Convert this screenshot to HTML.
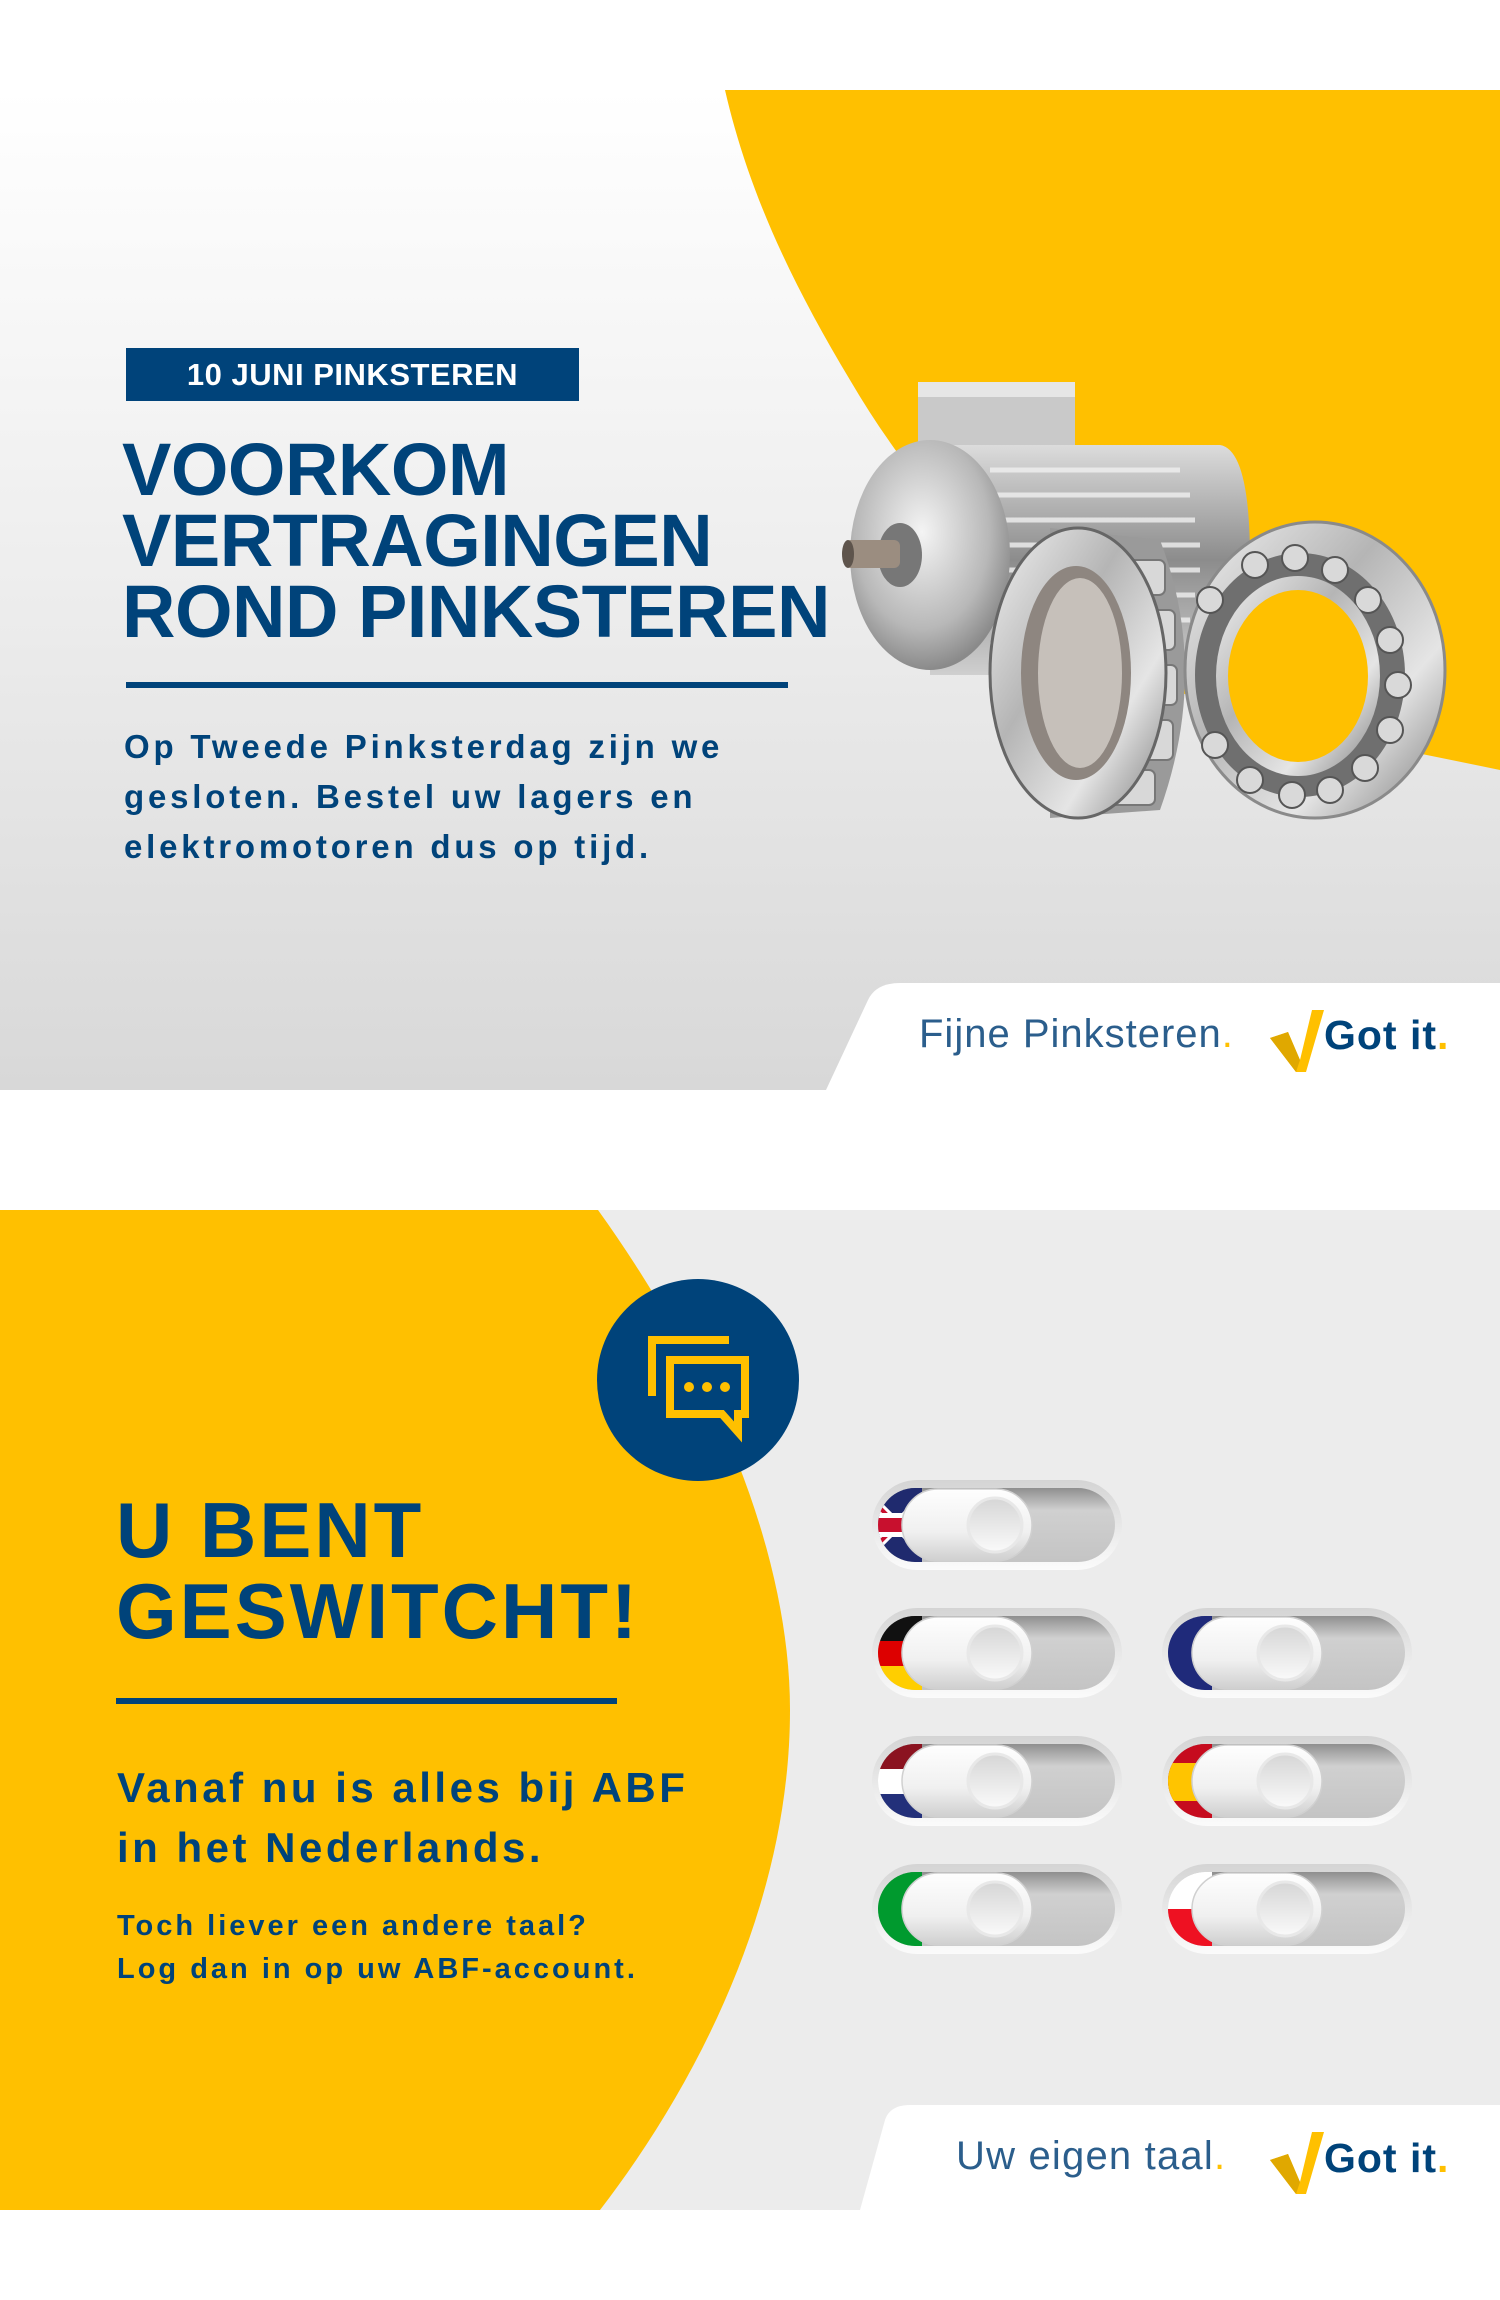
<!DOCTYPE html>
<html><head><meta charset="utf-8"><style>
*{margin:0;padding:0;box-sizing:border-box}
body{width:1500px;height:2300px;background:#fff;position:relative;overflow:hidden;font-family:"Liberation Sans",sans-serif}
.abs{position:absolute}
.navy{color:#00437a}
</style></head><body>
<svg class="abs" style="left:0;top:0" width="1500" height="2300" viewBox="0 0 1500 2300">
<defs>
<linearGradient id="gtop" x1="0" y1="0" x2="0" y2="1"><stop offset="0" stop-color="#ffffff"/><stop offset="0.5" stop-color="#ededed"/><stop offset="1" stop-color="#d8d8d8"/></linearGradient>
<linearGradient id="metal" x1="0" y1="0" x2="1" y2="1"><stop offset="0" stop-color="#f2f2f2"/><stop offset="0.4" stop-color="#b5b5b5"/><stop offset="0.7" stop-color="#e5e5e5"/><stop offset="1" stop-color="#7a7a7a"/></linearGradient>
<linearGradient id="metal2" x1="0" y1="0" x2="0" y2="1"><stop offset="0" stop-color="#dcdcdc"/><stop offset="0.5" stop-color="#8c8c8c"/><stop offset="1" stop-color="#cfcfcf"/></linearGradient>
<radialGradient id="bell" cx="0.45" cy="0.4" r="0.6"><stop offset="0" stop-color="#f4f4f4"/><stop offset="0.7" stop-color="#b8b8b8"/><stop offset="1" stop-color="#8a8a8a"/></radialGradient>
<linearGradient id="track" x1="0" y1="0" x2="0" y2="1"><stop offset="0" stop-color="#8f8f8f"/><stop offset="0.3" stop-color="#d0d0d0"/><stop offset="1" stop-color="#c4c4c4"/></linearGradient>
<linearGradient id="knob" x1="0" y1="0" x2="0" y2="1"><stop offset="0" stop-color="#fefefe"/><stop offset="0.6" stop-color="#f0f0f0"/><stop offset="1" stop-color="#cfcfcf"/></linearGradient>
<linearGradient id="circ" x1="0" y1="0" x2="0" y2="1"><stop offset="0" stop-color="#d6d6d6"/><stop offset="1" stop-color="#fafafa"/></linearGradient>
<linearGradient id="outer" x1="0" y1="0" x2="0" y2="1"><stop offset="0" stop-color="#d4d4d4"/><stop offset="1" stop-color="#fbfbfb"/></linearGradient>
<clipPath id="tclip"><rect x="6" y="8" width="237" height="74" rx="37"/></clipPath>
<g id="tog">
<rect x="0" y="0" width="250" height="90" rx="45" fill="url(#outer)"/>
<rect x="6" y="8" width="237" height="74" rx="37" fill="url(#track)"/>
</g>
<g id="tog2">
<rect x="30" y="9" width="130" height="72" rx="36" fill="url(#knob)" stroke="#d0d0d0" stroke-width="1.5"/>
<circle cx="123" cy="45" r="27" fill="url(#circ)" stroke="#e8e8e8" stroke-width="3"/>
</g>
</defs>
<rect x="0" y="90" width="1500" height="1000" fill="url(#gtop)"/>
<path d="M725 90 L1500 90 L1500 770 C1380 745 1240 720 1150 680 C1030 620 920 500 850 380 C790 280 748 190 725 90 Z" fill="#ffc000"/>
<g>
<rect x="918" y="382" width="157" height="70" fill="#c9c9c9"/>
<rect x="918" y="382" width="157" height="15" fill="#e6e6e6"/>
<path d="M930 445 L1220 445 Q1250 450 1250 560 Q1250 670 1210 675 L930 675 Z" fill="url(#metal2)"/>
<g stroke="#f0f0f0" stroke-width="5" opacity="0.8">
<line x1="990" y1="470" x2="1180" y2="470"/><line x1="990" y1="495" x2="1190" y2="495"/><line x1="990" y1="520" x2="1195" y2="520"/><line x1="990" y1="545" x2="1200" y2="545"/><line x1="990" y1="570" x2="1200" y2="570"/><line x1="990" y1="595" x2="1195" y2="595"/><line x1="990" y1="620" x2="1190" y2="620"/><line x1="990" y1="645" x2="1180" y2="645"/>
</g>
<ellipse cx="930" cy="555" rx="80" ry="115" fill="url(#bell)"/>
<ellipse cx="900" cy="555" rx="22" ry="32" fill="#777"/>
<rect x="845" y="540" width="55" height="28" rx="6" fill="#9b8d80"/>
<ellipse cx="848" cy="554" rx="6" ry="14" fill="#5e544c"/>
</g>
<path d="M1050 528 L1160 540 Q1210 670 1160 810 L1050 818 Z" fill="#9a9a9a"/>
<g fill="#d8d8d8" stroke="#777" stroke-width="2">
<rect x="1110" y="560" width="55" height="35" rx="6"/><rect x="1120" y="610" width="55" height="40" rx="6"/><rect x="1122" y="665" width="55" height="40" rx="6"/><rect x="1118" y="720" width="55" height="40" rx="6"/><rect x="1105" y="770" width="50" height="35" rx="6"/>
</g>
<ellipse cx="1078" cy="673" rx="88" ry="145" fill="url(#metal)" stroke="#666" stroke-width="3"/>
<ellipse cx="1076" cy="673" rx="55" ry="107" fill="#8e8680"/>
<ellipse cx="1080" cy="673" rx="42" ry="95" fill="#c6c0ba"/>
<ellipse cx="1315" cy="670" rx="130" ry="148" fill="url(#metal)" stroke="#8a8a8a" stroke-width="3"/>
<ellipse cx="1300" cy="675" rx="105" ry="122" fill="#6f6f6f"/>
<g fill="#d9d9d9" stroke="#555" stroke-width="2">
<circle cx="1255" cy="565" r="13"/><circle cx="1295" cy="558" r="13"/><circle cx="1335" cy="570" r="13"/><circle cx="1368" cy="600" r="13"/><circle cx="1390" cy="640" r="13"/><circle cx="1398" cy="685" r="13"/><circle cx="1390" cy="730" r="13"/><circle cx="1365" cy="768" r="13"/><circle cx="1330" cy="790" r="13"/><circle cx="1292" cy="795" r="13"/><circle cx="1250" cy="780" r="13"/><circle cx="1215" cy="745" r="13"/><circle cx="1210" cy="600" r="13"/>
</g>
<ellipse cx="1298" cy="676" rx="82" ry="100" fill="url(#metal)"/>
<ellipse cx="1298" cy="676" rx="70" ry="86" fill="#ffc000"/>
<path d="M826 1090 L868 1000 Q876 983 900 983 L1500 983 L1500 1090 Z" fill="#fff"/>
<rect x="0" y="1210" width="1500" height="1000" fill="#ececec"/>
<path d="M0 1210 L598 1210 C720 1380 790 1560 790 1710 C790 1900 700 2080 600 2210 L0 2210 Z" fill="#ffc000"/>
<path d="M860 2210 L885 2120 Q890 2105 910 2105 L1500 2105 L1500 2210 Z" fill="#fff"/>
<rect x="0" y="2210" width="1500" height="90" fill="#fff"/>
<circle cx="698" cy="1380" r="101" fill="#00437a"/>
<g fill="none" stroke="#ffc000" stroke-width="8">
<path d="M729 1340 L652 1340 L652 1396"/>
<path d="M670 1360 L745 1360 L745 1414 L738 1414 L738 1432 L722 1414 L670 1414 Z"/>
</g>
<g fill="#ffc000"><circle cx="689" cy="1387" r="5"/><circle cx="707" cy="1387" r="5"/><circle cx="725" cy="1387" r="5"/></g>
<g transform="translate(872,1480)"><use href="#tog"/><g clip-path="url(#tclip)"><rect x="0" y="0" width="50" height="90" fill="#1f2a6e"/><path d="M0 20 L50 70 M0 70 L50 20" stroke="#fff" stroke-width="10"/><path d="M0 20 L50 70 M0 70 L50 20" stroke="#c8102e" stroke-width="4"/><rect x="0" y="33" width="50" height="24" fill="#fff"/><rect x="0" y="38" width="50" height="14" fill="#c8102e"/></g><use href="#tog2"/></g>
<g transform="translate(872,1608)"><use href="#tog"/><g clip-path="url(#tclip)"><rect x="0" y="0" width="50" height="33" fill="#111"/><rect x="0" y="33" width="50" height="25" fill="#dd0000"/><rect x="0" y="58" width="50" height="32" fill="#ffce00"/></g><use href="#tog2"/></g>
<g transform="translate(1162,1608)"><use href="#tog"/><g clip-path="url(#tclip)"><rect x="0" y="0" width="50" height="90" fill="#1f2a7a"/></g><use href="#tog2"/></g>
<g transform="translate(872,1736)"><use href="#tog"/><g clip-path="url(#tclip)"><rect x="0" y="0" width="50" height="33" fill="#8b1320"/><rect x="0" y="33" width="50" height="25" fill="#fff"/><rect x="0" y="58" width="50" height="32" fill="#23307a"/></g><use href="#tog2"/></g>
<g transform="translate(1162,1736)"><use href="#tog"/><g clip-path="url(#tclip)"><rect x="0" y="0" width="50" height="90" fill="#c60b1e"/><rect x="0" y="27" width="50" height="38" fill="#ffc400"/></g><use href="#tog2"/></g>
<g transform="translate(872,1864)"><use href="#tog"/><g clip-path="url(#tclip)"><rect x="0" y="0" width="50" height="90" fill="#009a2e"/></g><use href="#tog2"/></g>
<g transform="translate(1162,1864)"><use href="#tog"/><g clip-path="url(#tclip)"><rect x="0" y="0" width="50" height="45" fill="#fff"/><rect x="0" y="45" width="50" height="45" fill="#ee1122"/></g><use href="#tog2"/></g>
<g transform="translate(1270,1010)"><path d="M0 28 L18 22 L30 50 L42 0 L54 0 L36 62 L26 62 Z" fill="#ffc000"/><path d="M0 28 L18 22 L30 50 L26 62 Z" fill="#e0a800"/></g>
<g transform="translate(1270,2132)"><path d="M0 28 L18 22 L30 50 L42 0 L54 0 L36 62 L26 62 Z" fill="#ffc000"/><path d="M0 28 L18 22 L30 50 L26 62 Z" fill="#e0a800"/></g>
<rect x="126" y="682" width="662" height="6" fill="#00437a"/>
<rect x="116" y="1698" width="501" height="6" fill="#00437a"/>
<rect x="126" y="348" width="453" height="53" fill="#00437a"/>
</svg>

<div class="abs" style="left:126px;top:348px;width:453px;height:53px;line-height:53px;text-align:center;color:#fff;font-weight:bold;font-size:31px;letter-spacing:0.5px">10 JUNI PINKSTEREN</div>
<div class="abs navy" style="left:122px;top:434px;font-weight:bold;font-size:74px;line-height:71px;letter-spacing:-0.5px">VOORKOM<br>VERTRAGINGEN<br>ROND PINKSTEREN</div>
<div class="abs navy" style="left:124px;top:722px;font-weight:bold;font-size:33px;line-height:50px;letter-spacing:3.8px">Op Tweede Pinksterdag zijn we<br>gesloten. Bestel uw lagers en<br>elektromotoren dus op tijd.</div>
<div class="abs" style="left:919px;top:1012px;font-size:40px;color:#2b5e8c;white-space:nowrap;letter-spacing:1px">Fijne Pinksteren<span style="color:#ffc000">.</span></div>
<div class="abs navy" style="left:1324px;top:1012px;font-size:41px;font-weight:bold;white-space:nowrap;letter-spacing:1px">Got it<span style="color:#ffc000">.</span></div>

<div class="abs navy" style="left:116px;top:1490px;font-weight:bold;font-size:78px;line-height:81px;letter-spacing:3px">U BENT<br>GESWITCHT!</div>
<div class="abs navy" style="left:117px;top:1758px;font-weight:bold;font-size:42px;line-height:60px;letter-spacing:3.5px">Vanaf nu is alles bij ABF<br>in het Nederlands.</div>
<div class="abs navy" style="left:117px;top:1905px;font-weight:bold;font-size:29px;line-height:43px;letter-spacing:3px">Toch liever een andere taal?<br>Log dan in op uw ABF-account.</div>
<div class="abs" style="left:956px;top:2134px;font-size:40px;color:#2b5e8c;white-space:nowrap;letter-spacing:1.2px">Uw eigen taal<span style="color:#ffc000">.</span></div>
<div class="abs navy" style="left:1324px;top:2135px;font-size:41px;font-weight:bold;white-space:nowrap;letter-spacing:1px">Got it<span style="color:#ffc000">.</span></div>
</body></html>
